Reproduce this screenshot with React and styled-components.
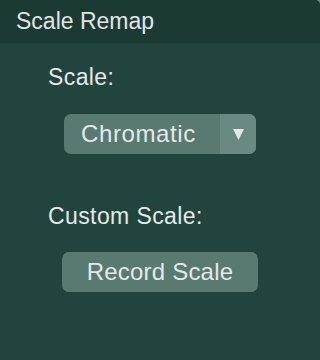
import styled, { createGlobalStyle } from 'styled-components';

const GlobalStyle = createGlobalStyle`
  html, body {
    margin: 0;
    padding: 0;
    background: #7d8280;
  }
  body {
    font-family: "Liberation Sans", Arial, sans-serif;
    -webkit-font-smoothing: antialiased;
  }
`;

const ArrowIcon = () => (
  <svg width="11" height="11" viewBox="0 0 11 11">
    <polygon points="0,0 11,0 5.5,11" fill="#e6e8e7" />
  </svg>
);

const App = () => {
  return (
    <>
      <GlobalStyle />
      <Panel>
        <Header>Scale Remap</Header>
        <Content>
          <Label>Scale:</Label>
          <Row>
            <Select type="button">
              <SelectValue>Chromatic</SelectValue>
              <SelectArrow>
                <ArrowIcon />
              </SelectArrow>
            </Select>
          </Row>
          <Label $top={48}>Custom Scale:</Label>
          <Row>
            <RecordBtn type="button">Record Scale</RecordBtn>
          </Row>
        </Content>
      </Panel>
    </>
  );
};

export default App;

const Panel = styled.div`
  display: flex;
  flex-direction: column;
  width: 320px;
  min-height: 100vh;
  background-color: #21453e;
  border-top-right-radius: 5px;
  overflow: hidden;
  color: #e6e8e7;
`;

const Header = styled.div`
  height: 43px;
  box-sizing: border-box;
  padding: 7px 16px 8px;
  font-size: 23px;
  line-height: 28px;
  background-color: #1b3a34;
  color: #e2e4e3;
`;

const Content = styled.div`
  display: flex;
  flex-direction: column;
  padding-top: 20px;
`;

const Label = styled.div`
  margin-top: ${p => (p.$top ? `${p.$top}px` : '0')};
  padding-left: 48px;
  font-size: 23px;
  line-height: 28px;
  letter-spacing: 0.4px;
`;

const Row = styled.div`
  display: flex;
  justify-content: center;
  margin-top: 23px;
`;

const Select = styled.button`
  display: flex;
  align-items: stretch;
  width: 192px;
  height: 40px;
  padding: 0;
  border: none;
  border-radius: 7px;
  overflow: hidden;
  background-color: #587a71;
  color: #e6e8e7;
  font-family: inherit;
  cursor: pointer;
`;

const SelectValue = styled.span`
  flex: 1;
  display: flex;
  align-items: center;
  padding-left: 17px;
  font-size: 24px;
  letter-spacing: 0.6px;
`;

const SelectArrow = styled.span`
  width: 36px;
  display: flex;
  align-items: center;
  justify-content: center;
  background-color: #6a8982;
`;

const RecordBtn = styled.button`
  width: 196px;
  height: 40px;
  margin-top: -1px;
  padding: 0;
  border: none;
  border-radius: 7px;
  background-color: #587a71;
  color: #e6e8e7;
  font-family: inherit;
  font-size: 24px;
  letter-spacing: 0.2px;
  cursor: pointer;
`;
